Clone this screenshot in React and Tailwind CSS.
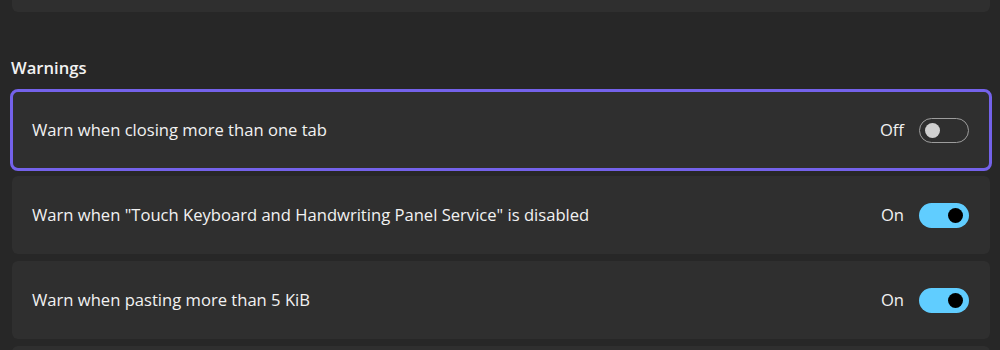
import React from "react";

function Toggle({ on }) {
  if (on) {
    return (
      <div className="w-[50px] h-[25px] rounded-full bg-[#60cdff] flex items-center justify-end pr-[6px]">
        <div className="w-[15px] h-[15px] rounded-full bg-black" />
      </div>
    );
  }
  return (
    <div className="w-[50px] h-[25px] rounded-full border border-[#9d9d9d] flex items-center pl-[5px]">
      <div className="w-[15px] h-[15px] rounded-full bg-[#d0d0d0]" />
    </div>
  );
}

function Row({ label, on, focused, empty }) {
  return (
    <div
      className={
        "h-[78px] rounded-[6px] bg-[#2f2f2f] flex items-center justify-between pl-[20px] pr-[21px] " +
        (focused ? "outline-[3px] outline outline-offset-[-1px] outline-[#7462ea]" : "")
      }
    >
      {!empty && (
        <>
          <span className="text-[16.6px] text-[#f2f2f2]">{label}</span>
          <div className="flex items-center gap-[15px]">
            <span className="text-[16.6px] text-[#f2f2f2]">{on ? "On" : "Off"}</span>
            <Toggle on={on} />
          </div>
        </>
      )}
    </div>
  );
}

export default function App() {
  return (
    <div
      className="w-[1000px] h-[350px] overflow-hidden bg-[#272727] px-[12px] pr-[10px]"
      style={{ fontFamily: '"Open Sans", "Noto Sans", sans-serif' }}
    >
      <div className="h-[12px] -mt-[10px] pt-[10px] box-content rounded-b-[6px] bg-[#2f2f2f]" />
      <div className="pt-[46px] pb-[13px] -ml-[1px] text-[16.6px] font-semibold text-[#f2f2f2] leading-[20px]">
        Warnings
      </div>
      <div className="flex flex-col gap-[7px]">
        <Row label="Warn when closing more than one tab" on={false} focused />
        <Row label={'Warn when "Touch Keyboard and Handwriting Panel Service" is disabled'} on />
        <Row label="Warn when pasting more than 5 KiB" on />
        <Row empty />
      </div>
    </div>
  );
}
